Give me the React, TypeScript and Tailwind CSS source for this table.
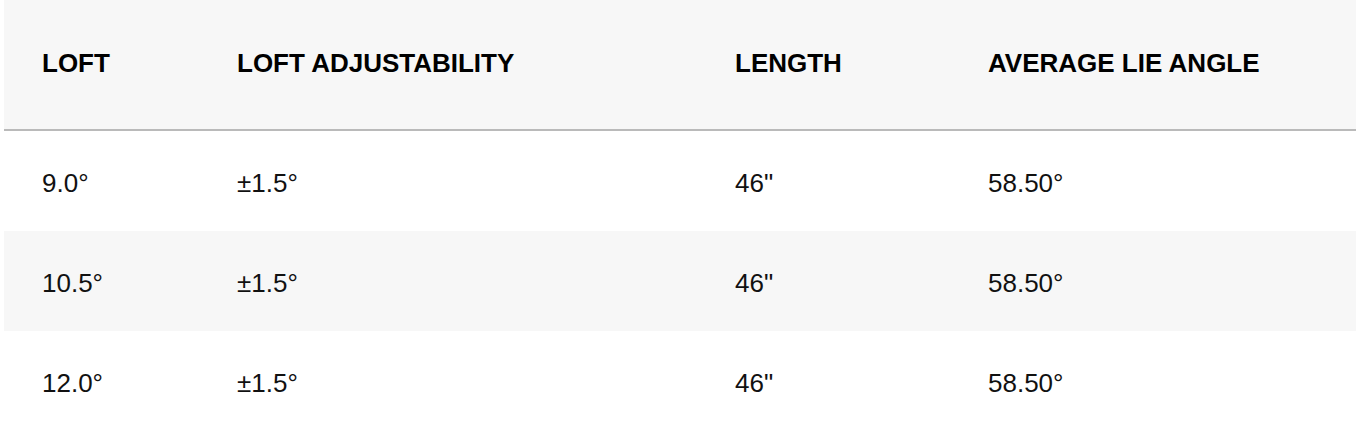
const headers = ['LOFT', 'LOFT ADJUSTABILITY', 'LENGTH', 'AVERAGE LIE ANGLE']

const rows = [
  ['9.0°', '±1.5°', '46"', '58.50°'],
  ['10.5°', '±1.5°', '46"', '58.50°'],
  ['12.0°', '±1.5°', '46"', '58.50°'],
]

export default function App() {
  return (
    <div className="w-[1356px] h-[436px] bg-white pl-[4px] font-['Liberation_Sans',Arial,sans-serif] text-[26px] leading-[26px]">
      <div className="grid grid-cols-[195px_498px_253px_1fr] bg-[#f7f7f7] border-b-2 border-[#bababa]">
        {headers.map((h) => (
          <div key={h} className="h-[129px] flex items-center pl-[38px] pb-[3px] font-bold text-black whitespace-nowrap">
            {h}
          </div>
        ))}
      </div>
      {rows.map((r, i) => (
        <div
          key={i}
          className={`grid grid-cols-[195px_498px_253px_1fr] ${i % 2 === 1 ? 'bg-[#f7f7f7]' : 'bg-white'}`}
        >
          {r.map((c, j) => (
            <div key={j} className="h-[100px] flex items-center pl-[38px] pt-[3px] text-[#111] whitespace-nowrap">
              {c}
            </div>
          ))}
        </div>
      ))}
    </div>
  )
}
